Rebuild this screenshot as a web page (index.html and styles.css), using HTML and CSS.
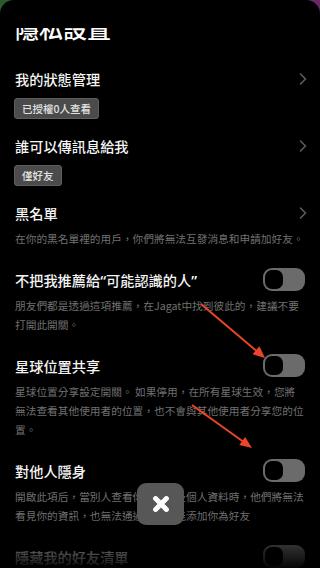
FILE: index.html
```html
<!DOCTYPE html>
<html lang="zh-Hant">
<head>
<meta charset="utf-8">
<title>隱私設置</title>
<link rel="stylesheet" href="styles.css">
</head>
<body>
<div class="screen">
  <div class="sheet">
    <div class="title-clip"><h1 class="title">隱私設置</h1></div>
    <div class="list">
      <section class="item">
        <div class="row">
          <span class="label">我的狀態管理</span>
          <svg class="chev" viewBox="0 0 8 12" width="8" height="12"><polyline points="1.5,1 6.5,6 1.5,11" /></svg>
        </div>
        <span class="tag">已授權0人查看</span>
      </section>
      <section class="item">
        <div class="row">
          <span class="label">誰可以傳訊息給我</span>
          <svg class="chev" viewBox="0 0 8 12" width="8" height="12"><polyline points="1.5,1 6.5,6 1.5,11" /></svg>
        </div>
        <span class="tag">僅好友</span>
      </section>
      <section class="item">
        <div class="row">
          <span class="label">黑名單</span>
          <svg class="chev" viewBox="0 0 8 12" width="8" height="12"><polyline points="1.5,1 6.5,6 1.5,11" /></svg>
        </div>
        <p class="desc"><span class="line">在你的黑名單裡的用戶，你們將無法互發消息和申請加好友。</span></p>
      </section>
      <section class="item">
        <div class="row">
          <span class="label">不把我推薦給<span class="q">“</span>可能認識的人<span class="q">”</span></span>
          <span class="toggle"><span class="knob"></span></span>
        </div>
        <p class="desc"><span class="line">朋友們都是透過這項推薦，在Jagat中找到彼此的，建議不要</span><span class="line">打開此開關。</span></p>
      </section>
      <section class="item">
        <div class="row">
          <span class="label">星球位置共享</span>
          <span class="toggle"><span class="knob"></span></span>
        </div>
        <p class="desc"><span class="line">星球位置分享設定開關。 如果停用，在所有星球生效，您將</span><span class="line">無法查看其他使用者的位置，也不會與其他使用者分享您的位</span><span class="line">置。</span></p>
      </section>
      <section class="item">
        <div class="row">
          <span class="label">對他人隱身</span>
          <span class="toggle"><span class="knob"></span></span>
        </div>
        <p class="desc"><span class="line">開啟此項后，當別人查看你的主頁及個人資料時，他們將無法</span><span class="line">看見你的資訊，也無法通過搜尋功能添加你為好友</span></p>
      </section>
      <section class="item">
        <div class="row">
          <span class="label">隱藏我的好友清單</span>
          <span class="toggle"><span class="knob"></span></span>
        </div>
      </section>
    </div>
  </div>
  <div class="fade"></div>
  <button class="close" type="button" aria-label="關閉">
    <svg viewBox="0 0 16 16" width="16" height="16"><line x1="2.6" y1="2.6" x2="13.4" y2="13.4"/><line x1="13.4" y1="2.6" x2="2.6" y2="13.4"/></svg>
  </button>
  <svg class="arrows" viewBox="0 0 320 568" width="320" height="568">
    <line x1="201" y1="304" x2="256" y2="350.5"/>
    <polygon points="265,358 252.6,354.2 259.4,346.2"/>
    <line x1="192" y1="405" x2="243" y2="441.5"/>
    <polygon points="252,448 239.3,445.1 245.1,436.9"/>
  </svg>
</div>
</body>
</html>
```
FILE: styles.css
```css
* { box-sizing: border-box; }
html, body { margin: 0; padding: 0; }
body {
  width: 320px;
  height: 568px;
  overflow: hidden;
  background: linear-gradient(90deg, #2d5a2b 0%, #2d5a2b 50%, #6a2866 50%, #6a2866 100%);
  font-family: "Noto Sans CJK TC", "Noto Sans", sans-serif;
}
.screen {
  position: relative;
  width: 320px;
  height: 568px;
  overflow: hidden;
}
.sheet {
  height: 568px;
  background: #000;
  border-radius: 14px 14px 0 0;
  padding: 0 15px;
  overflow: hidden;
}
.title-clip {
  margin-top: 28px;
  height: 14px;
  overflow: hidden;
}
.title {
  margin: -12px 0 0 0;
  font-size: 24px;
  line-height: 24px;
  font-weight: 500;
  color: #fff;
}
.list {
  margin-top: 25px;
  display: flex;
  flex-direction: column;
  gap: 15px;
}
.item {
  display: flex;
  flex-direction: column;
  align-items: flex-start;
}
.row {
  width: 100%;
  height: 23px;
  display: flex;
  align-items: center;
  justify-content: space-between;
}
.label {
  font-size: 14.2px;
  font-weight: 500;
  color: #f4f4f4;
  white-space: nowrap;
}
.q {
  font-family: "Noto Sans", sans-serif;
  font-weight: 600;
}
.chev {
  fill: none;
  stroke: #5c5c5c;
  stroke-width: 1.6;
  stroke-linecap: round;
  stroke-linejoin: round;
  margin-right: -2px;
}
.tag {
  margin-top: 8px;
  height: 21px;
  line-height: 19px;
  padding: 0 7px;
  font-size: 10.5px;
  font-weight: 500;
  color: #e2e2e2;
  background: #4b4b4b;
  border: 1px solid #5e5e5e;
  border-radius: 3px;
  margin-left: -1px;
}
.desc {
  margin: 5px 0 5px 0;
  font-size: 10.7px;
  line-height: 19px;
  color: #707070;
}
.line {
  display: block;
  white-space: nowrap;
}
.toggle {
  width: 42px;
  height: 23px;
  background: #6b6b6b;
  border-radius: 9px;
  padding: 2px;
  display: flex;
}
.knob {
  width: 18px;
  height: 19px;
  background: #000;
  border-radius: 7px;
}
.fade {
  position: absolute;
  left: 0;
  right: 0;
  bottom: 0;
  height: 53px;
  background: linear-gradient(to bottom, rgba(0,0,0,0) 0%, rgba(0,0,0,0.95) 100%);
}
.close {
  position: absolute;
  left: 137px;
  top: 483px;
  width: 47px;
  height: 42px;
  border: none;
  border-radius: 9px;
  background: #575757;
  padding: 0;
  display: flex;
  align-items: center;
  justify-content: center;
}
.close svg {
  stroke: #fff;
  stroke-width: 5;
  stroke-linecap: round;
}
.arrows {
  position: absolute;
  left: 0;
  top: 0;
  pointer-events: none;
}
.arrows line {
  stroke: #ec4528;
  stroke-width: 2;
}
.arrows polygon {
  fill: #ec4528;
}
```
